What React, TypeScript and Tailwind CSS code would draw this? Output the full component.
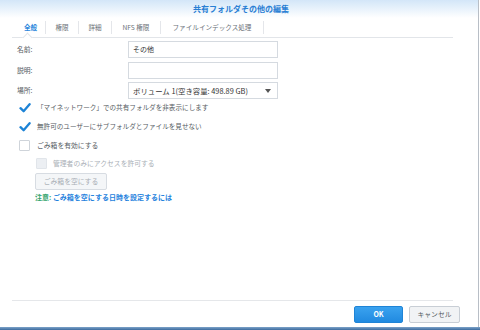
import React from "react";

const font = { fontFamily: '"Noto Sans CJK JP", "Noto Sans", sans-serif' };

function Check({ checked }: { checked: boolean }) {
  if (checked) {
    return (
      <svg width="12" height="12" viewBox="0 0 12 12" className="shrink-0">
        <path d="M1.5 6.2 L4.6 9.2 L10.6 2.2" fill="none" stroke="#1d83d6" strokeWidth="2.3" strokeLinecap="round" strokeLinejoin="round" />
      </svg>
    );
  }
  return <div className="w-[11px] h-[11px] border border-[#cfd4da] bg-white rounded-[1px] shrink-0" />;
}

export default function App() {
  return (
    <div className="w-[480px] h-[330px] flex flex-col bg-white overflow-hidden" style={font}>
      <div className="flex-1 flex flex-col border-r border-[#b8bec6] w-[479px] bg-white">
        <div className="h-[18px] bg-gradient-to-b from-[#d3e6f8] to-white flex items-center justify-center">
          <span className="text-[8px] font-bold text-[#2a7fd4] pl-[4px]">共有フォルダその他の編集</span>
        </div>
        <div className="mx-[12px] w-[441px] h-[20px] border-b border-[#e2e5e9] relative flex items-center text-[6.6px] text-[#6b7178]">
          <div className="w-[33px] flex justify-center text-[#2a86dc] font-bold pl-[4px]">全般</div>
          <div className="w-px h-[13px] bg-[#e4e6ea]" />
          <div className="w-[32px] flex justify-center">権限</div>
          <div className="w-px h-[13px] bg-[#e4e6ea]" />
          <div className="w-[32px] flex justify-center">詳細</div>
          <div className="w-px h-[13px] bg-[#e4e6ea]" />
          <div className="w-[48px] flex justify-center">NFS 権限</div>
          <div className="w-px h-[13px] bg-[#e4e6ea]" />
          <div className="w-[102px] flex justify-center">ファイルインデックス処理</div>
          <div className="w-px h-[13px] bg-[#e4e6ea]" />
          <div className="absolute left-[12px] bottom-[-4px] w-[7px] h-[7px] bg-white border-l border-t border-[#e2e5e9] rotate-45" />
        </div>
        <div className="flex flex-col pl-[17px] pt-[3px] text-[6.8px] text-[#555b62]">
          <div className="flex items-center h-[17px]">
            <span className="w-[111px]">名前:</span>
            <div className="w-[150px] h-[17px] border border-[#d5dae0] flex items-center px-[4px] text-[#333] text-[7px]">その他</div>
          </div>
          <div className="flex items-center h-[17px] mt-[4px]">
            <span className="w-[111px]">説明:</span>
            <div className="w-[150px] h-[17px] border border-[#d5dae0]" />
          </div>
          <div className="flex items-center h-[17px] mt-[3px]">
            <span className="w-[111px]">場所:</span>
            <div className="w-[150px] h-[17px] border border-[#d5dae0] flex items-center justify-between pl-[4px] pr-[6px] text-[#333] text-[7.4px]">
              <span>ボリューム 1(空き容量: 498.89 GB)</span>
              <svg width="6" height="4" viewBox="0 0 6 4"><path d="M0 0 L6 0 L3 4 Z" fill="#555" /></svg>
            </div>
          </div>
          <div className="flex items-center gap-[6px] mt-[1px] h-[16px] pl-[2px] text-[6.6px]">
            <Check checked />
            <span>「マイネットワーク」での共有フォルダを非表示にします</span>
          </div>
          <div className="flex items-center gap-[6px] mt-[3px] h-[16px] pl-[2px] text-[6.6px]">
            <Check checked />
            <span>無許可のユーザーにサブフォルダとファイルを見せない</span>
          </div>
          <div className="flex items-center gap-[7px] mt-[2px] h-[16px] pl-[2px]">
            <Check checked={false} />
            <span>ごみ箱を有効にする</span>
          </div>
          <div className="flex items-center gap-[6px] mt-[2px] h-[16px] pl-[19px] text-[#aab0b7]">
            <div className="w-[11px] h-[11px] bg-[#eceff3] border border-[#e1e5ea] rounded-[1px]" />
            <span>管理者のみにアクセスを許可する</span>
          </div>
          <div className="ml-[18px] mt-[2px] w-[72px] h-[17px] border border-[#d7dce2] bg-[#f4f6f8] rounded-[2px] flex items-center justify-center text-[#a7adb4]">
            ごみ箱を空にする
          </div>
          <div className="ml-[18px] mt-[2px] font-bold text-[7px]">
            <span className="text-[#35a46e]">注意: </span>
            <span className="text-[#1f82dd]">ごみ箱を空にする日時を設定するには</span>
          </div>
        </div>
        <div className="flex-1" />
        <div className="mx-[12px] w-[441px] h-px bg-[#e5e7ea]" />
        <div className="h-[26px] flex items-center justify-end gap-[6px] pr-[18px]">
          <div className="w-[49px] h-[17px] rounded-[2px] bg-gradient-to-b from-[#3aa2ef] to-[#208ae0] border border-[#1f84d6] flex items-center justify-center text-white text-[7px] font-bold">OK</div>
          <div className="w-[51px] h-[17px] rounded-[2px] bg-[#f1f3f5] border border-[#c8ced5] flex items-center justify-center text-[#555b62] text-[6.8px]">キャンセル</div>
        </div>
      </div>
      <div className="h-[3px] bg-gradient-to-b from-[#7da3c9] to-[#3c6b9e]" />
    </div>
  );
}
